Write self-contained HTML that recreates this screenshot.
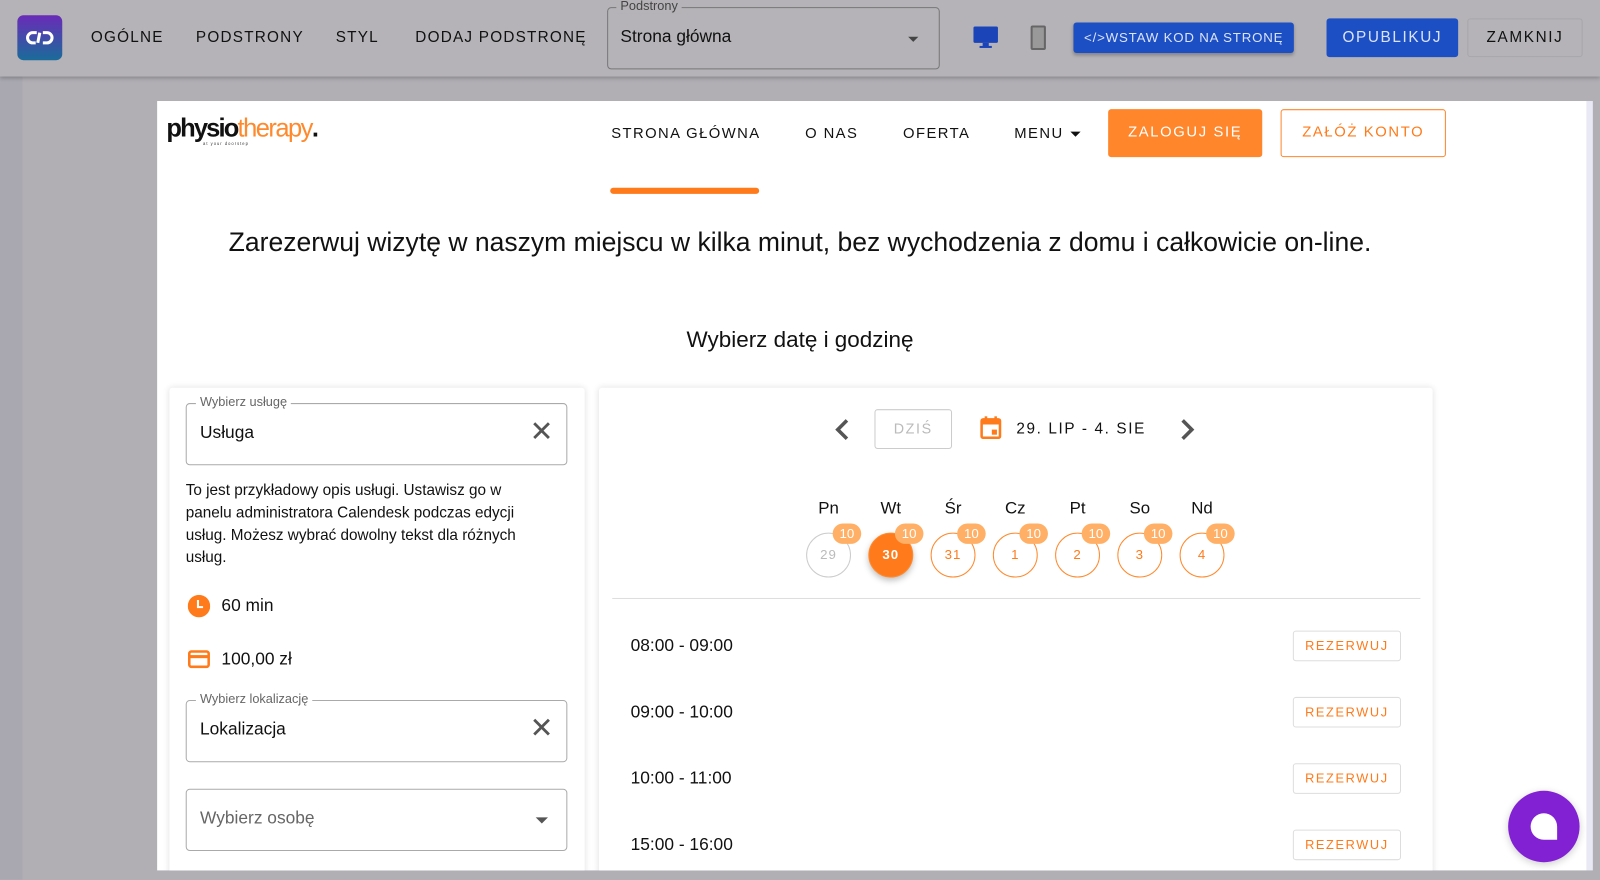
<!DOCTYPE html>
<html><head><meta charset="utf-8"><style>
*{box-sizing:border-box;margin:0;padding:0}
body{width:1600px;height:880px;overflow:hidden;background:#b1afb4;font-family:"Liberation Sans",sans-serif}
#w{position:absolute;left:0;top:0;width:1568px;height:862px;transform:scale(1.0204);transform-origin:0 0}
.a{position:absolute}
.tb{left:0;top:0;width:1568px;height:75px;background:#b5b3b7;box-shadow:0 2px 4px rgba(0,0,0,.25);z-index:2}
.nav{font-size:15px;letter-spacing:1.2px;color:#111;top:28px}
.pg{left:154px;top:99px;width:1401px;height:754px;background:#fff;overflow:hidden}
.mn{font-size:14.5px;letter-spacing:1.4px;color:#111;top:24px}
.card{background:#fff;box-shadow:0 0 6px rgba(0,0,0,.12);border-radius:3px}
.fld{border:1px solid #aaa;border-radius:4px;height:61px}
.lab{font-size:12.5px;color:#666;background:#fff;padding:0 4px;top:-9px;left:9px}
.day{font-size:16.5px;color:#111;width:44px;text-align:center}
.c{width:44px;height:44px;border-radius:50%;border:1.5px solid #ff8a2e;color:#ff7a1a;font-size:13px;letter-spacing:1px;text-align:center;line-height:41px}
.bd{width:28px;height:20px;border-radius:10px;background:#ffb066;color:#fff;font-size:13px;text-align:center;line-height:20px}
.tm{font-size:17px;color:#111}
.rb{width:106px;height:30px;border:1px solid #ddd;border-radius:3px;color:#ff7a1a;font-size:12.5px;letter-spacing:1.6px;text-align:center;line-height:28px}
</style></head><body><div id="w">
<div class="a" style="left:0;top:75px;width:22px;height:787px;background:#a9a8b0"></div>
<div class="a tb">
 <div class="a" style="left:17px;top:15px;width:44px;height:44px;border-radius:6px;background:linear-gradient(#6a2bb8,#1a6c9a)"></div>
 <svg class="a" style="left:25px;top:29px" width="28" height="16" viewBox="0 0 28 16"><path d="M11 3H7a5 5 0 0 0 0 10h3M17 3h4a5 5 0 0 1 0 10h-4M14 3l-2 10" stroke="#fff" stroke-width="3" fill="none"/></svg>
 <div class="a nav" style="left:89px">OGÓLNE</div>
 <div class="a nav" style="left:192px">PODSTRONY</div>
 <div class="a nav" style="left:329px">STYL</div>
 <div class="a nav" style="left:407px">DODAJ PODSTRONĘ</div>
 <div class="a" style="left:595px;top:7px;width:326px;height:61px;border:1px solid #777;border-radius:4px"></div>
 <div class="a" style="left:604px;top:-1px;font-size:12.5px;color:#444;background:#b5b3b7;padding:0 4px">Podstrony</div>
 <div class="a" style="left:608px;top:26px;font-size:17px;color:#111">Strona główna</div>
 <div class="a" style="left:890px;top:36px;border:5px solid transparent;border-top-color:#444;border-bottom:0"></div>
 <svg class="a" style="left:953px;top:25px" width="26" height="24" viewBox="0 0 26 24"><rect x="1" y="1" width="24" height="16" rx="1.5" fill="#1b44b8"/><rect x="10" y="17" width="6" height="4" fill="#1b44b8"/><rect x="7" y="20" width="12" height="2" fill="#1b44b8"/></svg>
 <div class="a" style="left:1010px;top:25px;width:15px;height:24px;border:2px solid #666;border-radius:2px;background:#999"></div>
 <div class="a" style="left:1052px;top:22px;width:216px;height:30px;background:#1d4fc4;border-radius:3px;color:#dbe3f7;font-size:13px;letter-spacing:0.8px;text-align:center;line-height:30px;box-shadow:0 2px 3px rgba(0,0,0,.25)">&lt;/&gt;WSTAW KOD NA STRONĘ</div>
 <div class="a" style="left:1300px;top:18px;width:129px;height:38px;background:#1d4fc4;border-radius:3px;color:#dbe3f7;font-size:15px;letter-spacing:1.6px;text-align:center;line-height:38px">OPUBLIKUJ</div>
 <div class="a" style="left:1438px;top:18px;width:113px;height:38px;border:1px solid #a8a6aa;border-radius:3px;color:#111;font-size:15px;letter-spacing:1.6px;text-align:center;line-height:36px">ZAMKNIJ</div>
</div>
<div class="a" style="left:1555px;top:99px;width:6px;height:754px;background:#e9e9f6"></div>
<div class="a pg">
 <div class="a" style="left:9px;top:13px;font-size:25px;font-weight:bold;letter-spacing:-1.8px;color:#111">physio<span style="color:#ff8a2e;font-weight:normal;letter-spacing:-1.5px">therapy</span>.</div>
 <div class="a" style="left:45px;top:39px;font-size:4px;color:#333;letter-spacing:1px">at your doorstep</div>
 <div class="a mn" style="left:445px">STRONA GŁÓWNA</div>
 <div class="a" style="left:444px;top:85px;width:146px;height:6px;background:#ff7a1a;border-radius:3px"></div>
 <div class="a mn" style="left:635px">O NAS</div>
 <div class="a mn" style="left:731px">OFERTA</div>
 <div class="a mn" style="left:840px">MENU</div>
 <div class="a" style="left:895px;top:30px;border:5px solid transparent;border-top-color:#111;border-bottom:0"></div>
 <div class="a" style="left:932px;top:8px;width:151px;height:47px;background:#ff862b;border-radius:3px;color:#fff;font-size:14.5px;letter-spacing:1.6px;text-align:center;line-height:47px">ZALOGUJ SIĘ</div>
 <div class="a" style="left:1101px;top:8px;width:162px;height:47px;border:1px solid #ff862b;border-radius:3px;color:#ff7a1a;font-size:14.5px;letter-spacing:1.6px;text-align:center;line-height:45px">ZAŁÓŻ KONTO</div>
 <div class="a" style="left:0;top:123px;width:1260px;text-align:center;font-size:26px;color:#111">Zarezerwuj wizytę w naszym miejscu w kilka minut, bez wychodzenia z domu i całkowicie on-line.</div>
 <div class="a" style="left:0;top:221px;width:1260px;text-align:center;font-size:22px;color:#111">Wybierz datę i godzinę</div>

 <div class="a card" style="left:12px;top:281px;width:407px;height:500px">
  <div class="a fld" style="left:16px;top:15px;width:374px"><div class="a lab">Wybierz usługę</div><div class="a" style="left:13px;top:18px;font-size:17px;color:#111">Usługa</div><div class="a" style="left:336px;top:10px;font-size:28px;color:#555">✕</div></div>
  <div class="a" style="left:16px;top:90px;width:345px;font-size:15px;line-height:22px;color:#111">To jest przykładowy opis usługi. Ustawisz go w panelu administratora Calendesk podczas edycji usług. Możesz wybrać dowolny tekst dla różnych usług.</div>
  <svg class="a" style="left:18px;top:203px" width="22" height="22" viewBox="0 0 22 22"><circle cx="11" cy="11" r="11" fill="#ff7a1a"/><path d="M10 5v7h5" stroke="#fff" stroke-width="2" fill="none"/></svg>
  <div class="a" style="left:51px;top:204px;font-size:17px;color:#111">60 min</div>
  <svg class="a" style="left:18px;top:257px" width="22" height="18" viewBox="0 0 22 18"><rect x="1.5" y="1.5" width="19" height="15" rx="2" stroke="#ff7a1a" stroke-width="2.5" fill="none"/><rect x="1" y="5" width="20" height="3" fill="#ff7a1a"/></svg>
  <div class="a" style="left:51px;top:256px;font-size:17px;color:#111">100,00 zł</div>
  <div class="a fld" style="left:16px;top:306px;width:374px"><div class="a lab">Wybierz lokalizację</div><div class="a" style="left:13px;top:18px;font-size:17px;color:#111">Lokalizacja</div><div class="a" style="left:336px;top:10px;font-size:28px;color:#555">✕</div></div>
  <div class="a fld" style="left:16px;top:393px;width:374px"><div class="a" style="left:13px;top:18px;font-size:17px;color:#666">Wybierz osobę</div><div class="a" style="left:342px;top:27px;border:6px solid transparent;border-top-color:#555;border-bottom:0"></div></div>
 </div>

 <div class="a card" style="left:433px;top:281px;width:817px;height:500px">
  <svg class="a" style="left:230px;top:29px" width="16" height="24" viewBox="0 0 16 24"><path d="M13 3 4 12l9 9" stroke="#555" stroke-width="3.5" fill="none"/></svg>
  <div class="a" style="left:270px;top:21px;width:76px;height:39px;border:1px solid #ccc;border-radius:3px;color:#bbb;font-size:14px;letter-spacing:1.6px;text-align:center;line-height:37px">DZIŚ</div>
  <svg class="a" style="left:373px;top:27px" width="22" height="24" viewBox="0 0 22 24"><rect x="2" y="4" width="18" height="18" rx="1.5" stroke="#ff7a1a" stroke-width="2.5" fill="none"/><rect x="2" y="4" width="18" height="5" fill="#ff7a1a"/><rect x="5" y="1" width="2.5" height="5" fill="#ff7a1a"/><rect x="14.5" y="1" width="2.5" height="5" fill="#ff7a1a"/><rect x="12" y="14" width="5" height="5" fill="#ff7a1a"/></svg>
  <div class="a" style="left:409px;top:32px;font-size:15px;letter-spacing:1.6px;color:#111">29. LIP - 4. SIE</div>
  <svg class="a" style="left:569px;top:29px" width="16" height="24" viewBox="0 0 16 24"><path d="M3 3l9 9-9 9" stroke="#555" stroke-width="3.5" fill="none"/></svg>
  <div class="a day" style="left:203px;top:109px">Pn</div><div class="a day" style="left:264px;top:109px">Wt</div><div class="a day" style="left:325px;top:109px">Śr</div><div class="a day" style="left:386px;top:109px">Cz</div><div class="a day" style="left:447px;top:109px">Pt</div><div class="a day" style="left:508px;top:109px">So</div><div class="a day" style="left:569px;top:109px">Nd</div>
  <div class="a c" style="left:203px;top:142px;border-color:#ccc;color:#bbb">29</div>
  <div class="a c" style="left:264px;top:142px;background:#ff7a1a;color:#fff;font-weight:bold;box-shadow:0 3px 6px rgba(0,0,0,.25)">30</div>
  <div class="a c" style="left:325px;top:142px">31</div><div class="a c" style="left:386px;top:142px">1</div><div class="a c" style="left:447px;top:142px">2</div><div class="a c" style="left:508px;top:142px">3</div><div class="a c" style="left:569px;top:142px">4</div>
  <div class="a bd" style="left:229px;top:133px">10</div><div class="a bd" style="left:290px;top:133px">10</div><div class="a bd" style="left:351px;top:133px">10</div><div class="a bd" style="left:412px;top:133px">10</div><div class="a bd" style="left:473px;top:133px">10</div><div class="a bd" style="left:534px;top:133px">10</div><div class="a bd" style="left:595px;top:133px">10</div>
  <div class="a" style="left:13px;top:206px;width:792px;height:1px;background:#ddd"></div>
  <div class="a tm" style="left:31px;top:243px">08:00 - 09:00</div><div class="a rb" style="left:680px;top:238px">REZERWUJ</div>
  <div class="a tm" style="left:31px;top:308px">09:00 - 10:00</div><div class="a rb" style="left:680px;top:303px">REZERWUJ</div>
  <div class="a tm" style="left:31px;top:373px">10:00 - 11:00</div><div class="a rb" style="left:680px;top:368px">REZERWUJ</div>
  <div class="a tm" style="left:31px;top:438px">15:00 - 16:00</div><div class="a rb" style="left:680px;top:433px">REZERWUJ</div>
 </div>
</div>
<div class="a" style="left:1478px;top:775px;width:70px;height:70px;border-radius:50%;background:#8220d4;box-shadow:0 2px 8px rgba(0,0,0,.2)"></div>
<div class="a" style="left:1500px;top:797px;width:26px;height:26px;border-radius:13px 13px 0 13px;background:#fff"></div>
</div></body></html>
